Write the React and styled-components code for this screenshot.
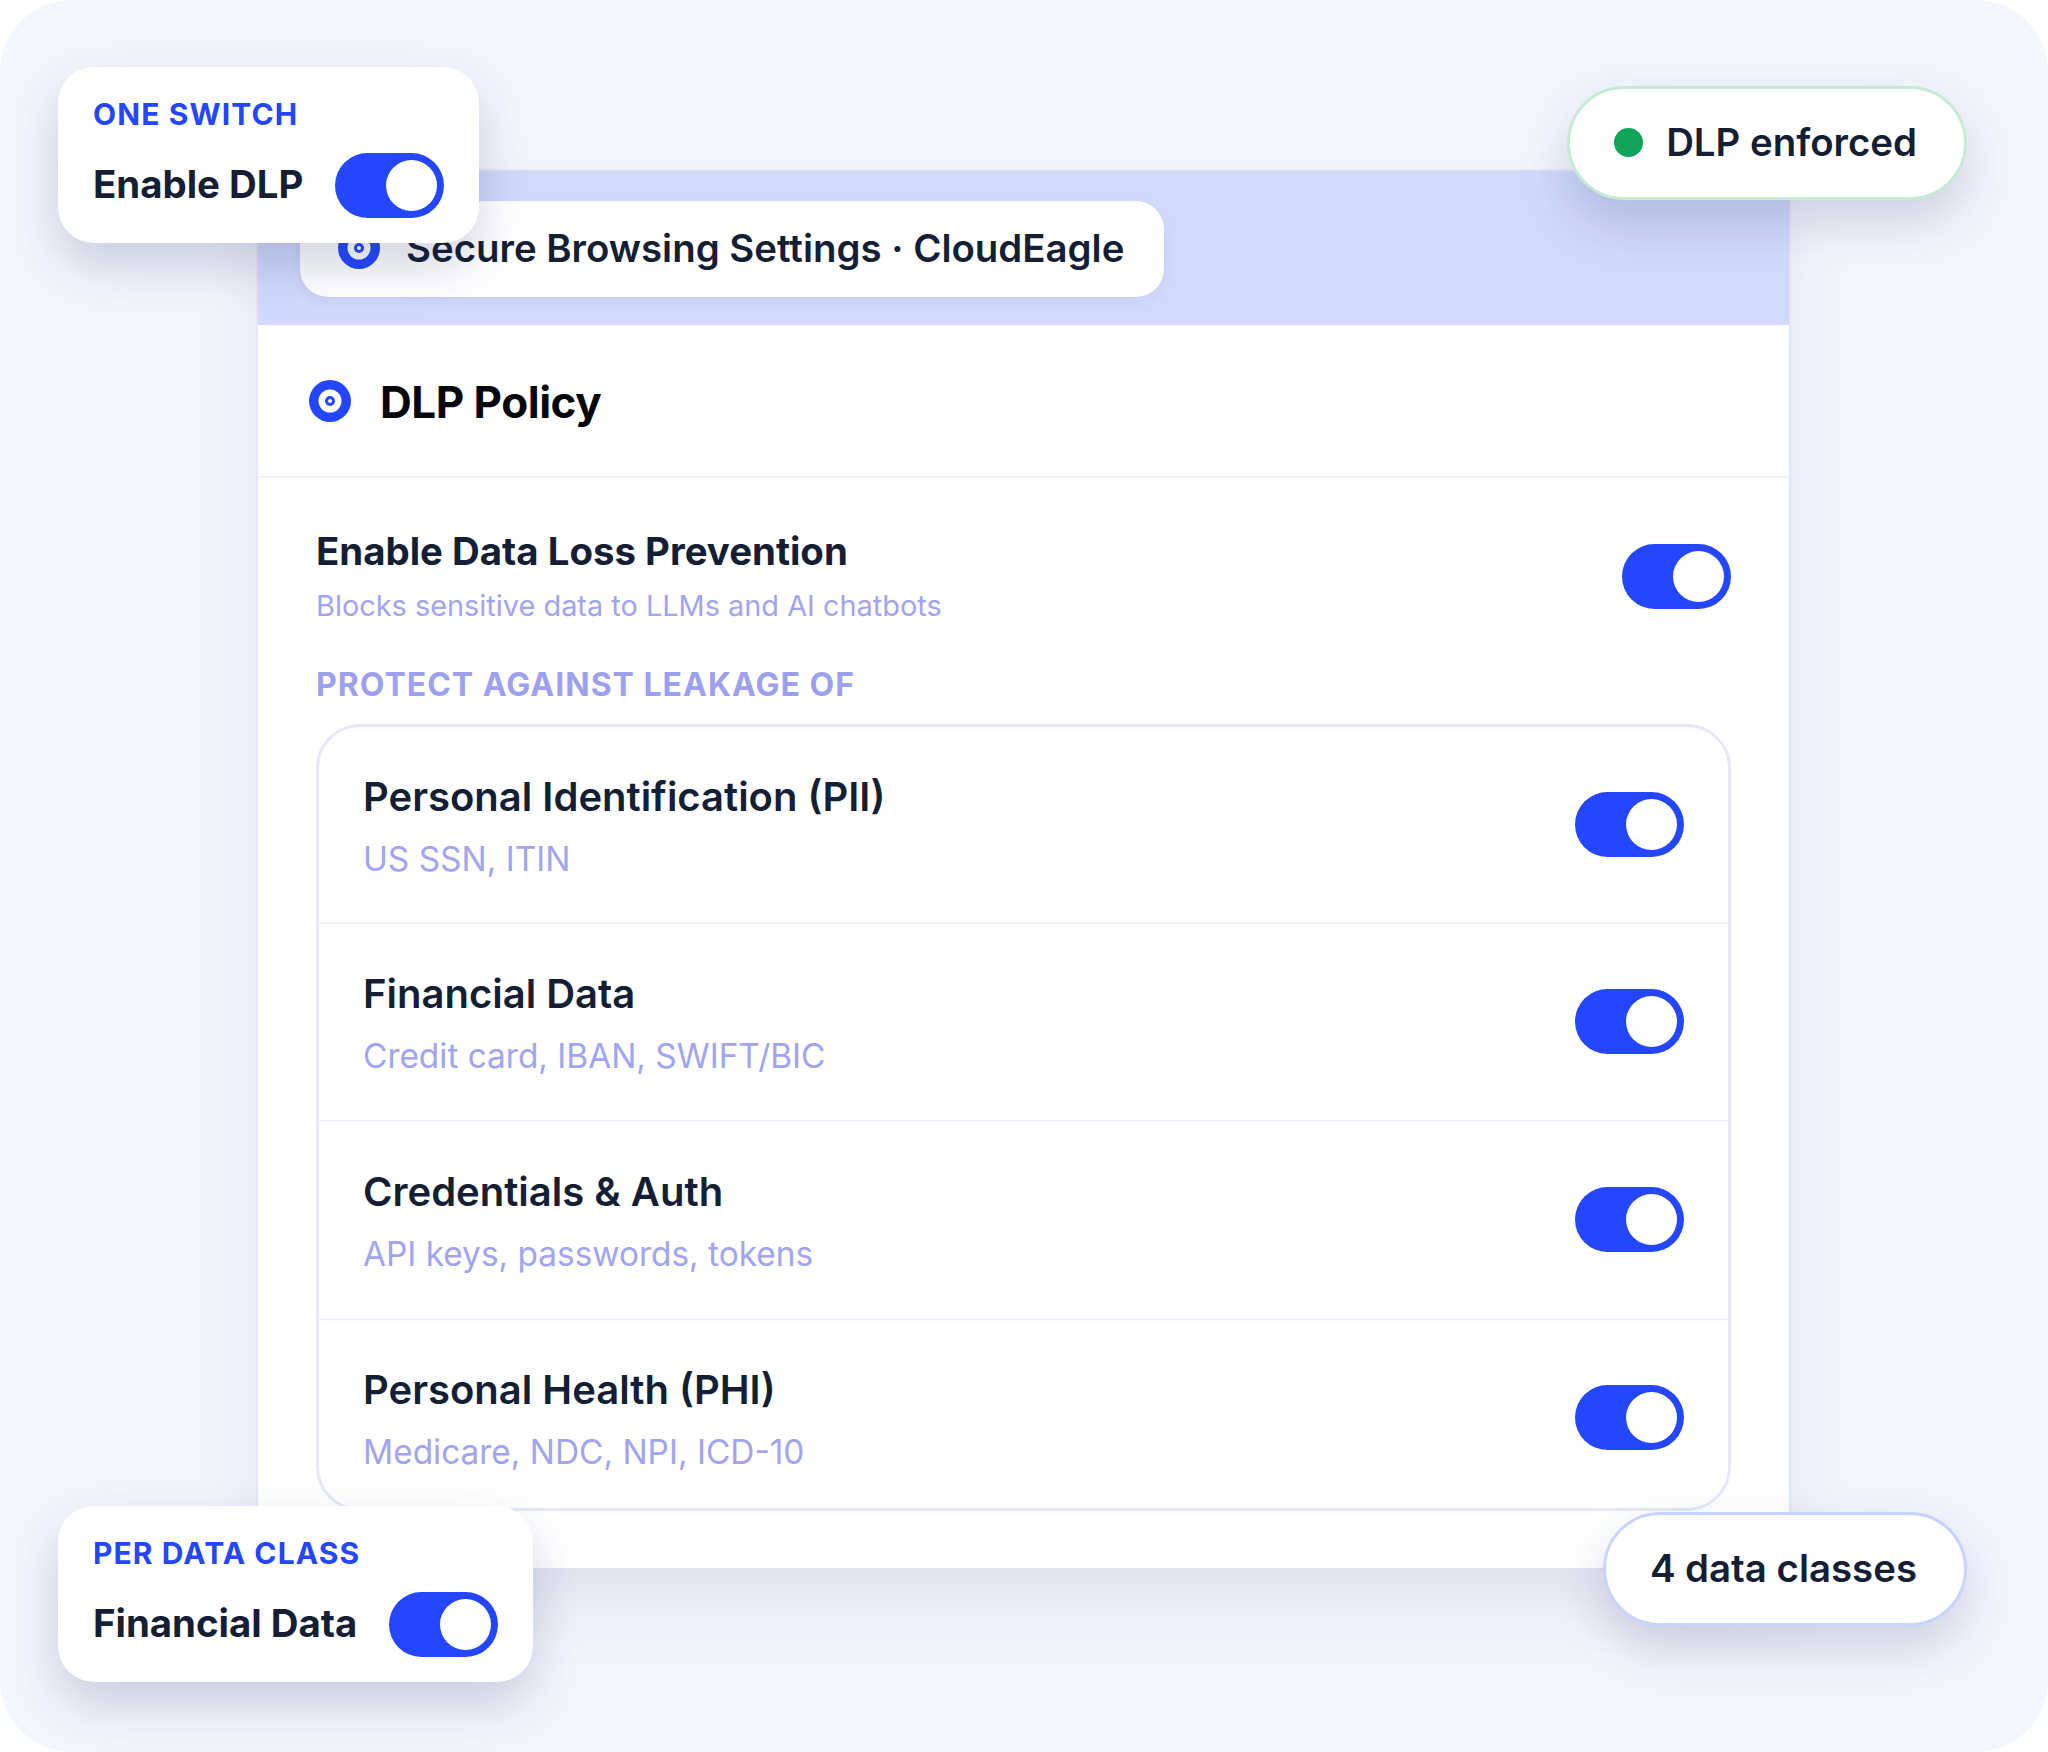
import React from "react";
import styled, { createGlobalStyle } from "styled-components";

const Global = createGlobalStyle`
  html, body {
    margin: 0;
    padding: 0;
    background: #fff;
  }
  * {
    box-sizing: border-box;
  }
`;

const Frame = styled.div`
  position: relative;
  width: 2048px;
  height: 1752px;
  padding: 169px 257px 0 256px;
  background: #f4f6fe;
  border-radius: 72px;
  overflow: hidden;
  font-family: Inter, "Liberation Sans", sans-serif;
  color: #141e35;
`;

const Panel = styled.div`
  height: 1399px;
  background: #fff;
  border: solid #e3e6f3;
  border-width: 2px 2px 0;
  box-shadow: 0 40px 70px -10px rgba(30, 41, 90, 0.1);
`;

const BrowserBar = styled.div`
  height: 154px;
  padding: 30px 0 0 42px;
  background: #d1d9fc;
`;

const Tab = styled.div`
  display: flex;
  align-items: center;
  gap: 26px;
  width: 864px;
  height: 96px;
  padding: 0 0 2px 38px;
  background: #fff;
  border-radius: 28px;
  font-size: 38.4px;
  font-weight: 600;
  box-shadow: 0 4px 12px rgba(30, 41, 90, 0.05);
`;

const TitleRow = styled.div`
  display: flex;
  align-items: center;
  gap: 29px;
  height: 153px;
  padding: 1px 0 0 51px;
  border-bottom: 2px solid #f1f4fb;
`;

const Title = styled.h1`
  margin: 2px 0 0;
  font-size: 44px;
  font-weight: 700;
  letter-spacing: -0.5px;
  color: #05070d;
`;

const Body = styled.div`
  padding: 51px 58px 0;
`;

const MasterRow = styled.div`
  display: flex;
  align-items: center;
  justify-content: space-between;
`;

const MasterText = styled.div`
  margin-top: -3px;
`;

const MasterName = styled.div`
  font-size: 38.4px;
  font-weight: 700;
  line-height: 50px;
`;

const MasterHint = styled.div`
  margin-top: 13px;
  font-size: 28.9px;
  line-height: 34px;
  color: #a1a4f1;
`;

const SectionLabel = styled.div`
  margin: 42px 0 19px;
  font-size: 32px;
  font-weight: 700;
  line-height: 40px;
  letter-spacing: 1px;
  color: #9da0ef;
`;

const ClassList = styled.div`
  height: 787px;
  border: 3px solid #e6e9f5;
  border-radius: 44px;
`;

const ClassRow = styled.div`
  display: flex;
  align-items: center;
  justify-content: space-between;
  height: ${(p) => (p.$first ? "194.5px" : "198px")};
  padding: 0 44px;
  border-top: ${(p) => (p.$first ? "none" : "2px solid #f1f4fb")};
`;

const ClassText = styled.div`
  margin-top: 2px;
`;

const ClassName = styled.div`
  font-size: 40px;
  font-weight: 600;
  line-height: 50px;
`;

const ClassHint = styled.div`
  margin-top: 17px;
  font-size: 33.4px;
  line-height: 40px;
  color: #a1a4f1;
`;

const Track = styled.div`
  display: flex;
  align-items: center;
  justify-content: flex-end;
  flex: none;
  width: 109px;
  height: 65px;
  padding-right: 7px;
  background: #2546ff;
  border-radius: 33px;
`;

const Thumb = styled.div`
  width: 51px;
  height: 51px;
  background: #fff;
  border-radius: 50%;
`;

const FloatCard = styled.div`
  position: absolute;
  left: 58px;
  top: ${(p) => p.$top}px;
  width: ${(p) => p.$width}px;
  height: 176px;
  padding: 29px 35px 0;
  background: #fff;
  border-radius: 36px;
  box-shadow: 0 22px 50px rgba(30, 41, 90, 0.2);
`;

const CardLabel = styled.div`
  font-size: 30px;
  font-weight: 700;
  line-height: 36px;
  letter-spacing: 1.1px;
  color: #2546ff;
`;

const CardRow = styled.div`
  display: flex;
  align-items: center;
  justify-content: space-between;
  margin-top: 21px;
`;

const CardName = styled.span`
  margin-bottom: 3px;
  font-size: 38.4px;
  font-weight: 700;
`;

const Pill = styled.div`
  position: absolute;
  right: 81px;
  top: ${(p) => p.$top}px;
  display: flex;
  align-items: center;
  gap: 23px;
  height: 114px;
  padding: 0 47px 2px 44px;
  background: #fff;
  border: 3px solid ${(p) => p.$border};
  border-radius: 57px;
  font-size: 38.4px;
  font-weight: 600;
  box-shadow: 0 22px 50px rgba(30, 41, 90, 0.18);
`;

const Dot = styled.span`
  width: 29px;
  height: 29px;
  background: #10a35a;
  border-radius: 50%;
`;

function Toggle() {
  return (
    <Track>
      <Thumb />
    </Track>
  );
}

function TargetIcon() {
  return (
    <svg width="42" height="42" viewBox="0 0 42 42" style={{ flex: "none" }}>
      <circle cx="21" cy="21" r="21" fill="#2546ff" />
      <circle cx="21" cy="21" r="11.5" fill="#fff" />
      <circle cx="21" cy="21" r="5" fill="#2546ff" />
      <circle cx="21" cy="21" r="2" fill="#fff" />
    </svg>
  );
}

const classes = [
  { name: "Personal Identification (PII)", hint: "US SSN, ITIN" },
  { name: "Financial Data", hint: "Credit card, IBAN, SWIFT/BIC" },
  { name: "Credentials & Auth", hint: "API keys, passwords, tokens" },
  { name: "Personal Health (PHI)", hint: "Medicare, NDC, NPI, ICD-10" },
];

export default function App() {
  return (
    <Frame>
      <Global />
      <Panel>
        <BrowserBar>
          <Tab>
            <TargetIcon />
            Secure Browsing Settings · CloudEagle
          </Tab>
        </BrowserBar>
        <TitleRow>
          <TargetIcon />
          <Title>DLP Policy</Title>
        </TitleRow>
        <Body>
          <MasterRow>
            <MasterText>
              <MasterName>Enable Data Loss Prevention</MasterName>
              <MasterHint>Blocks sensitive data to LLMs and AI chatbots</MasterHint>
            </MasterText>
            <Toggle />
          </MasterRow>
          <SectionLabel>PROTECT AGAINST LEAKAGE OF</SectionLabel>
          <ClassList>
            {classes.map((c, i) => (
              <ClassRow key={c.name} $first={i === 0}>
                <ClassText>
                  <ClassName>{c.name}</ClassName>
                  <ClassHint>{c.hint}</ClassHint>
                </ClassText>
                <Toggle />
              </ClassRow>
            ))}
          </ClassList>
        </Body>
      </Panel>

      <FloatCard $top={67} $width={421}>
        <CardLabel>ONE SWITCH</CardLabel>
        <CardRow>
          <CardName>Enable DLP</CardName>
          <Toggle />
        </CardRow>
      </FloatCard>
      <FloatCard $top={1506} $width={475}>
        <CardLabel>PER DATA CLASS</CardLabel>
        <CardRow>
          <CardName>Financial Data</CardName>
          <Toggle />
        </CardRow>
      </FloatCard>

      <Pill $top={86} $border="#c5ebd4">
        <Dot />
        DLP enforced
      </Pill>
      <Pill $top={1512} $border="#c9d3ff">
        4 data classes
      </Pill>
    </Frame>
  );
}
